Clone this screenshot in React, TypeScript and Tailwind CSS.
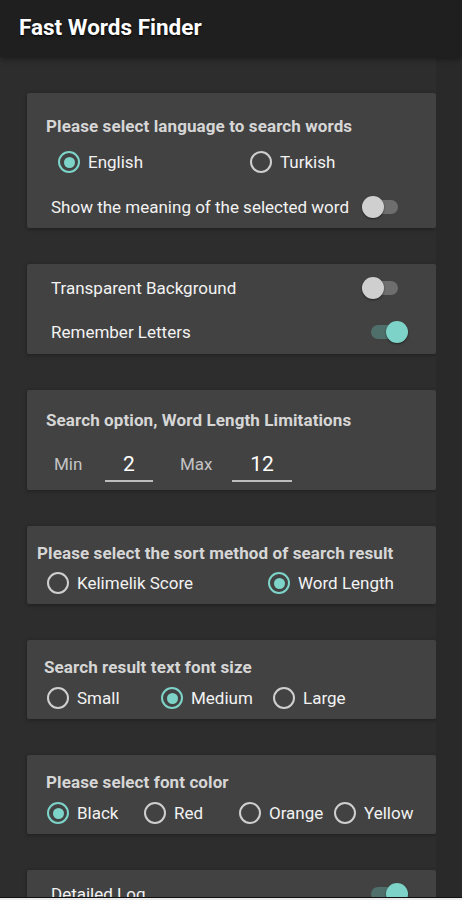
import React from "react";

function Radio({ label, checked, width }: { label: string; checked?: boolean; width?: string }) {
  return (
    <div className={`flex items-center gap-[8px] ${width ?? ""}`}>
      <div
        className={`flex h-[22px] w-[22px] shrink-0 items-center justify-center rounded-full border-[2.5px] ${
          checked ? "border-[#7dd3c8]" : "border-[#cfcfcf]"
        }`}
      >
        {checked && <div className="h-[11px] w-[11px] rounded-full bg-[#7dd3c8]" />}
      </div>
      <span className="whitespace-nowrap text-[17px] leading-[24px] text-[#f2f2f2]">{label}</span>
    </div>
  );
}

function Switch({ on }: { on?: boolean }) {
  return (
    <div className="relative flex h-[24px] w-[36px] shrink-0 items-center">
      <div className={`h-[14px] w-[36px] rounded-full ${on ? "bg-[#4f6f6b]" : "bg-[#6e6e6e]"}`} />
      <div
        className={`absolute top-[1px] h-[22px] w-[22px] rounded-full shadow-[0_1px_2px_rgba(0,0,0,0.5)] ${
          on ? "right-[-1px] bg-[#7dd3c8]" : "left-[0px] bg-[#cfcfcf]"
        }`}
      />
    </div>
  );
}

function Card({ className, children }: { className?: string; children: React.ReactNode }) {
  return (
    <div className={`rounded-[2px] bg-[#424242] shadow-[0_1px_4px_rgba(0,0,0,0.35)] ${className ?? ""}`}>
      {children}
    </div>
  );
}

function Title({ children, className }: { children: React.ReactNode; className?: string }) {
  return (
    <div
      className={`whitespace-nowrap text-[17px] font-bold leading-[20px] tracking-[0.1px] text-[#d6d6d6] ${
        className ?? ""
      }`}
    >
      {children}
    </div>
  );
}

function SwitchRow({ label, on, mr }: { label: string; on?: boolean; mr: string }) {
  return (
    <div className={`flex h-[24px] items-center pl-[24px] ${mr}`}>
      <span className="flex-1 whitespace-nowrap text-[17px] leading-[24px] text-[#f2f2f2]">{label}</span>
      <Switch on={on} />
    </div>
  );
}

export default function App() {
  return (
    <div
      className="flex h-[900px] w-[462px] flex-col overflow-hidden bg-[#2d2d2d]"
      style={{ fontFamily: "Roboto, 'Noto Sans', sans-serif" }}
    >
      <header className="relative z-10 flex h-[57px] shrink-0 items-center bg-[#1f1f1f] pb-[4px] pl-[19px] shadow-[0_2px_6px_rgba(0,0,0,0.4)]">
        <h1 className="text-[22.5px] font-bold leading-[26px] text-white [text-shadow:0_1px_2px_rgba(0,0,0,0.9)]">
          Fast Words Finder
        </h1>
      </header>

      <main className="flex min-h-0 flex-1 overflow-hidden">
        <div className="flex w-[436px] shrink-0 flex-col gap-[36px] pl-[27px] pt-[36px]">
          {/* Card 1 */}
          <Card className="pt-[23px] pb-[9px]">
            <Title className="pl-[19px]">Please select language to search words</Title>
            <div className="mt-[14px] flex pl-[31px]">
              <Radio label="English" checked width="w-[192px]" />
              <Radio label="Turkish" />
            </div>
            <div className="mt-[21px]">
              <SwitchRow label="Show the meaning of the selected word" mr="mr-[38px]" />
            </div>
          </Card>

          {/* Card 2 */}
          <Card className="flex flex-col gap-[20px] pt-[12px] pb-[10px]">
            <SwitchRow label="Transparent Background" mr="mr-[38px]" />
            <SwitchRow label="Remember Letters" on mr="mr-[29px]" />
          </Card>

          {/* Card 3 */}
          <Card className="pt-[20px] pb-[8px]">
            <Title className="pl-[19px]">Search option, Word Length Limitations</Title>
            <div className="mt-[16px] flex h-[36px] items-start pl-[27px]">
              <span className="mt-[6px] w-[51px] text-[17px] leading-[24px] text-[#c4c4c4]">Min</span>
              <div className="flex h-[36px] w-[48px] flex-col items-center border-b-2 border-[#bdbdbd]">
                <span className="mt-[4px] text-[21px] leading-[28px] text-white">2</span>
              </div>
              <span className="ml-[27px] mt-[6px] w-[52px] text-[17px] leading-[24px] text-[#c4c4c4]">Max</span>
              <div className="flex h-[36px] w-[60px] flex-col items-center border-b-2 border-[#bdbdbd]">
                <span className="mt-[4px] text-[21px] leading-[28px] text-white">12</span>
              </div>
            </div>
          </Card>

          {/* Card 4 */}
          <Card className="pt-[17px] pb-[9px]">
            <Title className="pl-[10px]">Please select the sort method of search result</Title>
            <div className="mt-[8px] flex pl-[20px]">
              <Radio label="Kelimelik Score" width="w-[221px]" />
              <Radio label="Word Length" checked />
            </div>
          </Card>

          {/* Card 5 */}
          <Card className="pt-[17px] pb-[9px]">
            <Title className="pl-[17px]">Search result text font size</Title>
            <div className="mt-[9px] flex pl-[20px]">
              <Radio label="Small" width="w-[114px]" />
              <Radio label="Medium" checked width="w-[112px]" />
              <Radio label="Large" />
            </div>
          </Card>

          {/* Card 6 */}
          <Card className="pt-[17px] pb-[9px]">
            <Title className="pl-[19px]">Please select font color</Title>
            <div className="mt-[9px] flex pl-[20px]">
              <Radio label="Black" checked width="w-[97px]" />
              <Radio label="Red" width="w-[95px]" />
              <Radio label="Orange" width="w-[95px]" />
              <Radio label="Yellow" />
            </div>
          </Card>

          {/* Card 7 */}
          <Card className="pt-[12px] pb-[9px]">
            <SwitchRow label="Detailed Log" on mr="mr-[29px]" />
          </Card>
        </div>
        <div className="flex-1 bg-[#292929]" />
      </main>

      <div className="h-[3px] shrink-0 border-t border-[#111] bg-[#ececec]" />
    </div>
  );
}
